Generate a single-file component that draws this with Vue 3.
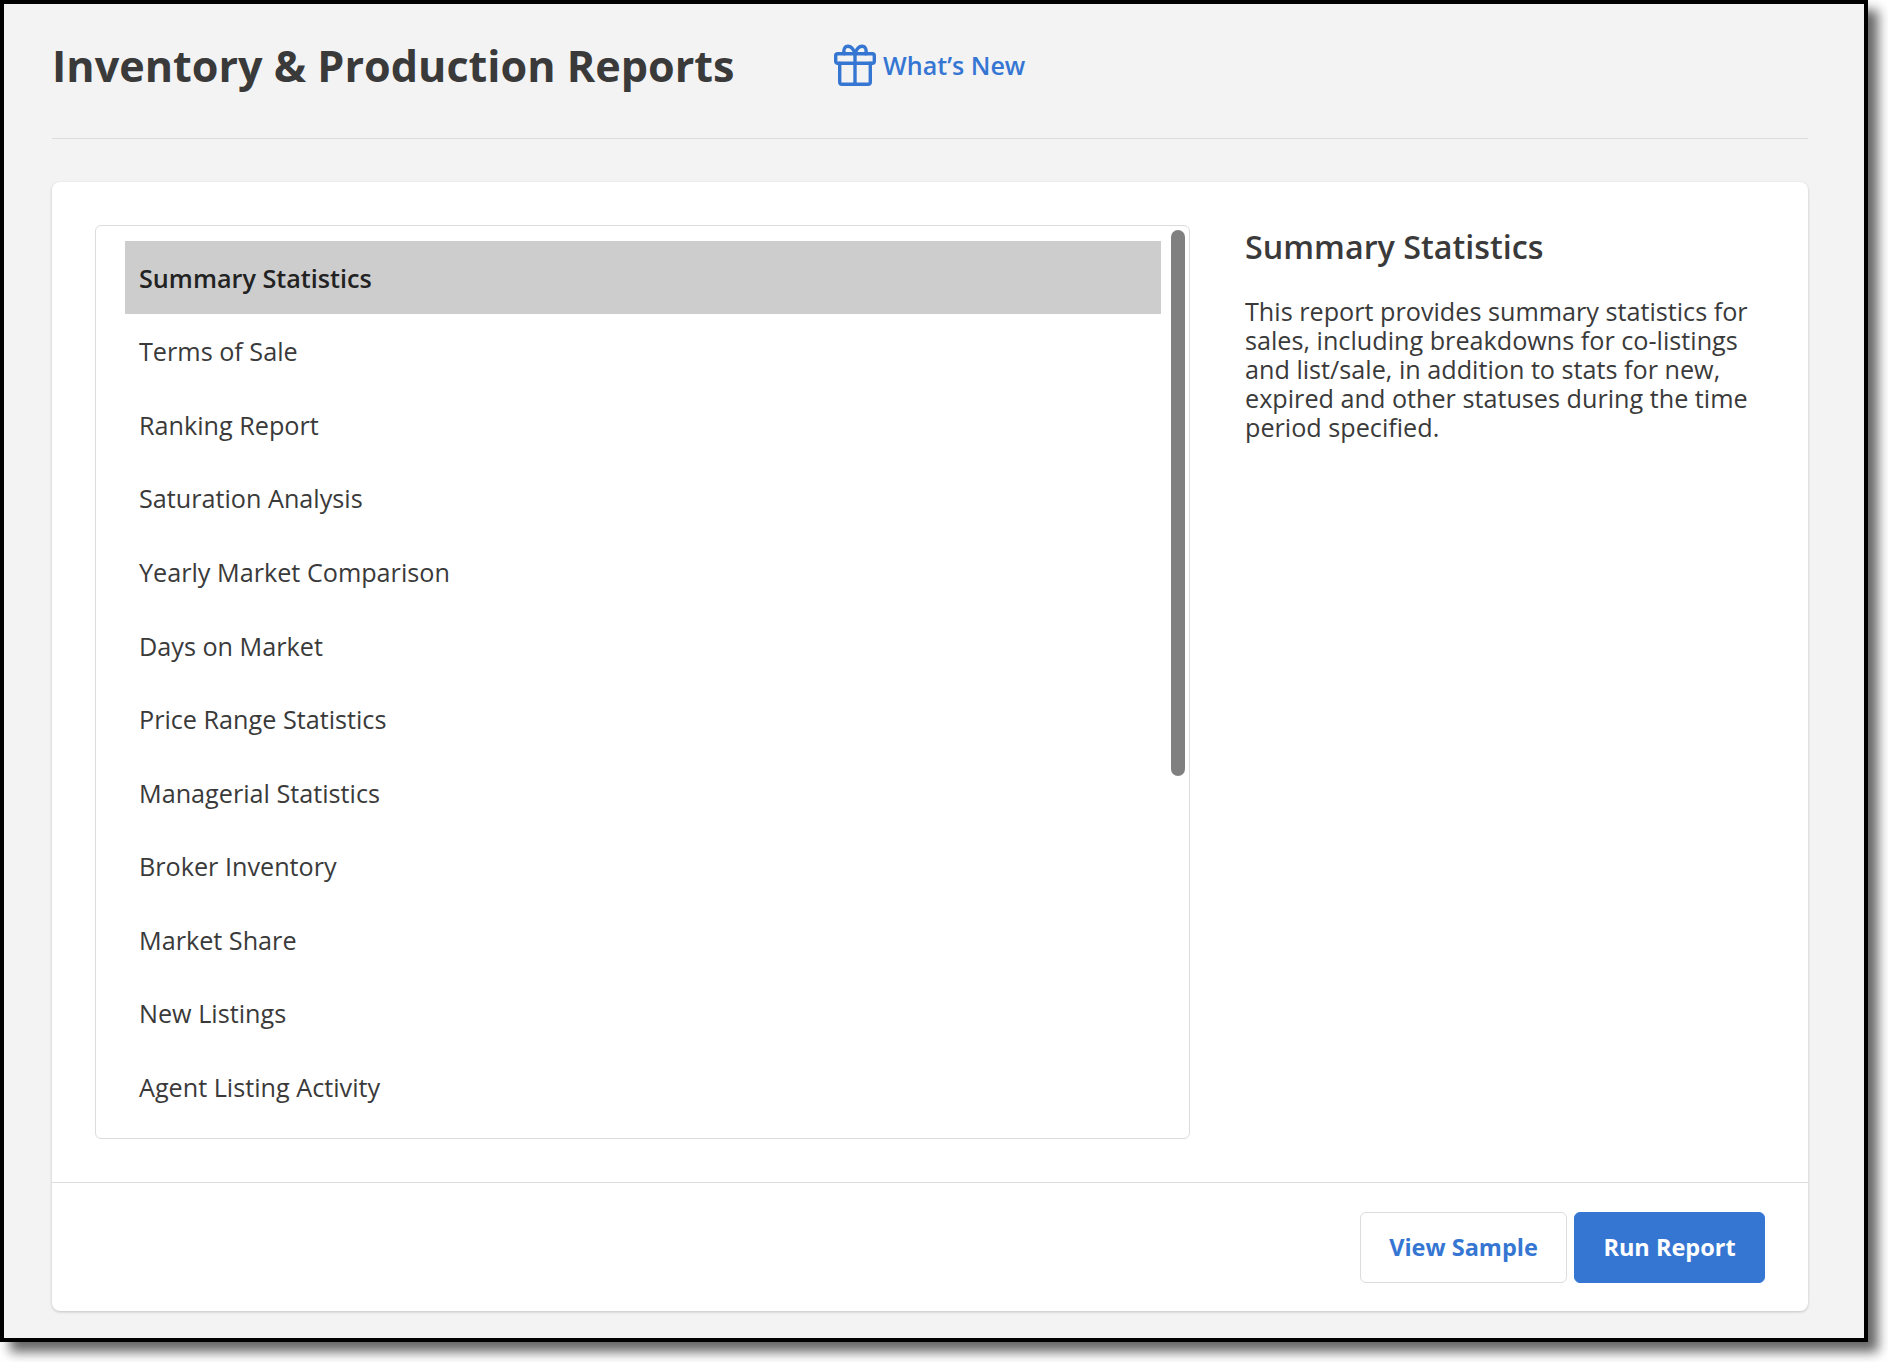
<template>
  <div class="page">
    <div class="frame">
      <header class="page-header">
        <h1 class="page-title">Inventory &amp; Production Reports</h1>
        <a class="whats-new">
          <svg class="gift" width="44" height="43" viewBox="0 0 44 43" fill="none" stroke="#3676d3" stroke-width="3.4" stroke-linecap="round" stroke-linejoin="round">
            <rect x="2.7" y="9.7" width="38.6" height="9.6" rx="2" />
            <path d="M6.7 19.3V38a2.3 2.3 0 0 0 2.3 2.3h26a2.3 2.3 0 0 0 2.3-2.3V19.3" />
            <path d="M22 9.7v30.6" />
            <path d="M22 9.7C20.5 5 18 2.2 15 2.2c-3.4 0-5.2 4-3.6 7.5" />
            <path d="M22 9.7C23.5 5 26 2.2 29 2.2c3.4 0 5.2 4 3.6 7.5" />
          </svg>
          <span>What’s New</span>
        </a>
      </header>

      <section class="card">
        <div class="card-body">
          <div class="report-list">
            <div
              v-for="(report, i) in reports"
              :key="report"
              class="report-row"
              :class="{ selected: i === selected }"
            >
              {{ report }}
            </div>
            <div class="scroll-thumb"></div>
          </div>

          <div class="report-detail">
            <h2>{{ reports[selected] }}</h2>
            <p>{{ description }}</p>
          </div>
        </div>

        <footer class="card-footer">
          <button class="btn btn-outline">View Sample</button>
          <button class="btn btn-primary">Run Report</button>
        </footer>
      </section>
    </div>
  </div>
</template>

<script setup>
import { ref } from 'vue'

const selected = ref(0)

const reports = [
  'Summary Statistics',
  'Terms of Sale',
  'Ranking Report',
  'Saturation Analysis',
  'Yearly Market Comparison',
  'Days on Market',
  'Price Range Statistics',
  'Managerial Statistics',
  'Broker Inventory',
  'Market Share',
  'New Listings',
  'Agent Listing Activity',
]

const description =
  'This report provides summary statistics for sales, including breakdowns for co-listings and list/sale, in addition to stats for new, expired and other statuses during the time period specified.'
</script>

<style>
html,
body {
  margin: 0;
  background: #fff;
}
</style>

<style scoped>
.page {
  width: 1888px;
  height: 1362px;
  font-family: "Open Sans", "Liberation Sans", sans-serif;
  color: #3a3a3a;
  overflow: hidden;
}

.frame {
  box-sizing: border-box;
  width: 1868px;
  height: 1342px;
  padding: 0 56px 0 48px;
  background: #f3f3f3;
  border: 4px solid #000;
  box-shadow: 10px 10px 11px rgba(0, 0, 0, 0.6);
}

.page-header {
  display: flex;
  align-items: center;
  height: 135px;
  padding-bottom: 12px;
  box-sizing: border-box;
  border-bottom: 1px solid #dcdcdc;
}

.page-title {
  margin: 0;
  padding-top: 2px;
  width: 781px;
  font-size: 43.15px;
  font-weight: 700;
  line-height: 58px;
}

.whats-new {
  display: flex;
  align-items: center;
  gap: 6px;
  color: #3676d3;
  font-size: 25.1px;
  font-weight: 600;
}

.card {
  margin-top: 43px;
  height: 1129px;
  box-sizing: border-box;
  background: #fff;
  border-radius: 8px;
  box-shadow: 0 1px 3px rgba(0, 0, 0, 0.2);
}

.card-body {
  display: flex;
  height: 1001px;
  box-sizing: border-box;
  padding: 43px 36px 43px 43px;
  border-bottom: 1px solid #dcdcdc;
}

.report-list {
  position: relative;
  box-sizing: border-box;
  width: 1095px;
  flex: none;
  padding: 15px 28px 0 29px;
  border: 1px solid #dcdcdc;
  border-radius: 6px;
  overflow: hidden;
}

.report-row {
  display: flex;
  align-items: center;
  height: 73.55px;
  padding-left: 14px;
  font-size: 25.2px;
}

.report-row.selected {
  height: 73px;
  margin-bottom: 0.55px;
  background: #cdcdcd;
  color: #222;
  font-weight: 600;
}

.scroll-thumb {
  position: absolute;
  top: 4px;
  right: 4px;
  width: 14px;
  height: 546px;
  border-radius: 7px;
  background: #808080;
}

.report-detail {
  flex: 1;
  padding-left: 55px;
}

.report-detail h2 {
  margin: -1px 0 0;
  font-size: 32.3px;
  font-weight: 600;
  line-height: 44px;
}

.report-detail p {
  margin: 29px 0 0;
  font-size: 25.2px;
  line-height: 29px;
}

.card-footer {
  display: flex;
  justify-content: flex-end;
  gap: 7px;
  padding: 29px 43px 0 0;
}

.btn {
  height: 71px;
  box-sizing: border-box;
  padding-bottom: 3px;
  border-radius: 6px;
  font-family: inherit;
  font-size: 23.5px;
  font-weight: 700;
}

.btn-outline {
  width: 207px;
  background: #fff;
  border: 1px solid #dcdcdc;
  color: #3676d3;
}

.btn-primary {
  width: 191px;
  background: #3676d3;
  border: 1px solid #3676d3;
  color: #fff;
}
</style>
